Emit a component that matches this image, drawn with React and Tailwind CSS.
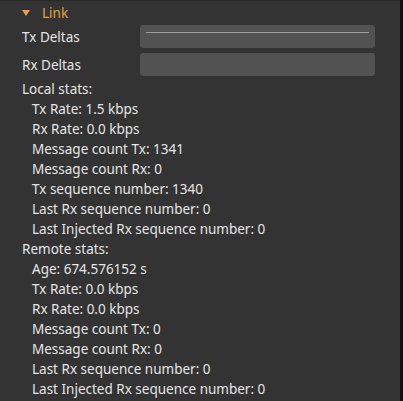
import React from 'react'

const localStats = [
  'Tx Rate: 1.5 kbps',
  'Rx Rate: 0.0 kbps',
  'Message count Tx: 1341',
  'Message count Rx: 0',
  'Tx sequence number: 1340',
  'Last Rx sequence number: 0',
  'Last Injected Rx sequence number: 0',
]

const remoteStats = [
  'Age: 674.576152 s',
  'Tx Rate: 0.0 kbps',
  'Rx Rate: 0.0 kbps',
  'Message count Tx: 0',
  'Message count Rx: 0',
  'Last Rx sequence number: 0',
  'Last Injected Rx sequence number: 0',
]

function DeltaRow({ label, line }) {
  return (
    <div className="flex items-center h-[23px]">
      <span className="w-[118px] shrink-0">{label}</span>
      <div className="relative w-[235px] h-[23px] rounded-[3px] bg-[#525252]">
        {line && <div className="absolute left-[6px] right-[6px] top-[7px] h-px bg-[#a0a0a0]" />}
      </div>
    </div>
  )
}

export default function App() {
  return (
    <div className="flex w-[403px] h-[401px] bg-[#111] overflow-hidden">
      <div
        className="w-[400px] h-full bg-[#333333] border-t border-[#282828] text-[#e6e6e6] text-[13.5px] leading-[20px]"
        style={{ fontFamily: '"Noto Sans", "Open Sans", sans-serif' }}
      >
        {/* Header */}
        <div className="flex items-center h-[24px] pl-[22px] text-[#e8a040]">
          <svg width="8" height="6" viewBox="0 0 8 6" className="mr-[12px]">
            <polygon points="0,0 8,0 4,6" fill="#e8a040" />
          </svg>
          <span>Link</span>
        </div>

        <div className="pl-[22px] flex flex-col gap-[5px]">
          <DeltaRow label="Tx Deltas" line />
          <DeltaRow label="Rx Deltas" />
        </div>

        <div className="pl-[22px] pt-[3px]">
          <div>Local stats:</div>
          <div className="pl-[10px]">
            {localStats.map(s => <div key={s}>{s}</div>)}
          </div>
          <div>Remote stats:</div>
          <div className="pl-[10px]">
            {remoteStats.map(s => <div key={s}>{s}</div>)}
          </div>
        </div>
      </div>
    </div>
  )
}
